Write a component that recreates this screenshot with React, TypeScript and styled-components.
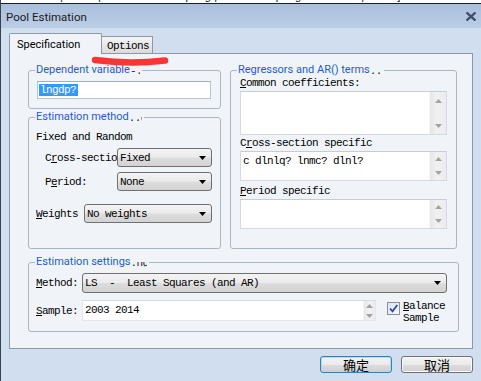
import React from "react";
import styled, { createGlobalStyle } from "styled-components";

const UI = `Roboto, "Liberation Sans", "Noto Sans", sans-serif`;
const MONO = `"Liberation Mono", "DejaVu Sans Mono", monospace`;
const CJK = `"Noto Sans CJK SC", "Noto Sans", sans-serif`;
const PANEL_BG = "#f0f4f9";

const Global = createGlobalStyle`
  html, body { margin: 0; padding: 0; background: #d1deef; }
  body { width: 481px; height: 381px; overflow: hidden; font-family: ${UI}; }
  * { box-sizing: border-box; }
`;

const Window = styled.div`
  position: relative;
  width: 481px;
  height: 381px;
  background: #d1deef;
  border-left: 1px solid #39414f;
  display: flex;
  flex-direction: column;
  overflow: hidden;
`;

const TopStrip = styled.div`
  height: 4px;
  background: #ffffff;
  border-bottom: 1px solid #1e1e1e;
  overflow: hidden;
  white-space: nowrap;
`;

const StripText = styled.div`
  margin-top: -10px;
  padding-left: 4px;
  font: 11px/12px "Liberation Sans", sans-serif;
  color: #111;
  letter-spacing: 0.2px;
`;

const TitleBar = styled.div`
  height: 24px;
  background: linear-gradient(#a9bfdc, #bccde6);
  display: flex;
  align-items: center;
  justify-content: space-between;
  padding: 0 5px 0 5px;
`;

const TitleText = styled.div`
  font-family: ${UI};
  font-size: 11.5px;
  color: #1b1b1b;
  padding-top: 1px;
`;

const CloseIcon = () => (
  <svg width="10" height="9" viewBox="0 0 10 9">
    <path d="M1.3 1.2 L8.7 7.8 M8.7 1.2 L1.3 7.8" stroke="#3f4e68" strokeWidth="2.3" strokeLinecap="square" />
  </svg>
);

const Body = styled.div`
  display: flex;
  flex-direction: column;
  padding: 5px 8px 0 8px;
`;

const TabRow = styled.div`
  display: flex;
  align-items: flex-end;
  height: 20px;
`;

const Tab = styled.div<{ $active?: boolean }>`
  position: relative;
  z-index: 1;
  border: 1px solid #8d99a9;
  ${(p) =>
    p.$active
      ? `
    width: 93px;
    height: 21px;
    margin-bottom: -1px;
    border-bottom: 0;
    background: ${PANEL_BG};
    border-radius: 2px 2px 0 0;
    font-family: ${UI};
    font-size: 11px;
    line-height: 17px;
    padding: 2px 0 0 7px;
    color: #000;
  `
      : `
    width: 51px;
    height: 17px;
    border-left: 0;
    border-bottom: 0;
    background: linear-gradient(#f5f5f5, #dadada);
    font-family: ${MONO};
    font-size: 11px;
    letter-spacing: -0.6px;
    line-height: 16px;
    padding: 1px 0 0 5px;
    color: #000;
  `}
`;

const Panel = styled.div`
  width: 464px;
  height: 296px;
  border: 1px solid #8d99a9;
  background: ${PANEL_BG};
  padding: 16px 0 0 18px;
  display: flex;
  flex-direction: column;
`;

const TopRow = styled.div`
  display: flex;
  gap: 9px;
`;

const Column = styled.div`
  display: flex;
  flex-direction: column;
`;

const Group = styled.div<{ $w: number; $h: number; $mt?: number }>`
  width: ${(p) => p.$w}px;
  height: ${(p) => p.$h}px;
  margin-top: ${(p) => p.$mt ?? 0}px;
  border: 1px solid #aab6c6;
  border-radius: 3px;
  display: flex;
  flex-direction: column;
  align-items: flex-start;
`;

const Legend = styled.div`
  display: flex;
  align-items: flex-start;
  margin: -8px 0 0 6px;
  padding: 0 2px 0 1px;
  height: 14px;
  background: ${PANEL_BG};
  color: #1c5cd3;
  font-family: ${UI};
  font-size: 11px;
  line-height: 14px;
  white-space: nowrap;
`;

const Ghost = styled.span<{ $w: number }>`
  display: inline-block;
  width: ${(p) => p.$w}px;
  height: 5px;
  margin-top: 7px;
  overflow: hidden;
`;

const GhostText = styled.span`
  display: block;
  margin-top: -5px;
  font-family: ${MONO};
  font-size: 11px;
  line-height: 12px;
  letter-spacing: -0.6px;
  color: #222;
`;

const TextInput = styled.div`
  width: 174px;
  height: 18px;
  margin: 4px 0 0 8px;
  background: #fff;
  border: 1px solid #b7c4d5;
  border-top-color: #a3b0c2;
  display: flex;
  align-items: center;
  padding-left: 1px;
`;

const Selected = styled.span`
  display: inline-block;
  height: 12px;
  line-height: 12px;
  padding: 0 2px 0 1px;
  background: #3399ff;
  color: #fff;
  font-family: ${MONO};
  font-size: 11px;
  letter-spacing: -0.6px;
`;

const MonoLine = styled.div<{ $mt?: number; $ml?: number; $lh?: number }>`
  margin-top: ${(p) => p.$mt ?? 0}px;
  margin-left: ${(p) => p.$ml ?? 0}px;
  line-height: ${(p) => p.$lh ?? 14}px;
  font-family: ${MONO};
  font-size: 11px;
  letter-spacing: -0.6px;
  color: #000;
  white-space: nowrap;
`;

const U = styled.span`
  text-decoration: underline;
  text-underline-offset: 1px;
`;

const FieldRow = styled.div<{ $mt: number; $pl: number; $h: number }>`
  display: flex;
  align-items: center;
  margin-top: ${(p) => p.$mt}px;
  padding-left: ${(p) => p.$pl}px;
  height: ${(p) => p.$h}px;
`;

const FieldLabel = styled.div<{ $w: number }>`
  width: ${(p) => p.$w}px;
  overflow: hidden;
  white-space: nowrap;
  font-family: ${MONO};
  font-size: 11px;
  letter-spacing: -0.6px;
  color: #000;
`;

const Combo = styled.div<{ $w: number }>`
  width: ${(p) => p.$w}px;
  height: 100%;
  border: 1px solid #707070;
  border-radius: 3px;
  background: linear-gradient(#f3f3f3 0%, #ebebeb 48%, #dddddd 52%, #d2d2d2 100%);
  display: flex;
  align-items: center;
  padding: 0 5px 0 2px;
  font-family: ${MONO};
  font-size: 11px;
  letter-spacing: -0.6px;
  color: #000;
  white-space: pre;
`;

const ComboText = styled.span`
  flex: 1;
  overflow: hidden;
`;

const Tri = ({ up, color }: { up?: boolean; color: string }) => (
  <svg width="7" height="4" viewBox="0 0 7 4">
    <polygon points={up ? "0,4 7,4 3.5,0" : "0,0 7,0 3.5,4"} fill={color} />
  </svg>
);

const TextBox = styled.div<{ $h: number; $mt: number }>`
  width: 207px;
  height: ${(p) => p.$h}px;
  margin: ${(p) => p.$mt}px 0 0 9px;
  background: #fff;
  border: 1px solid #d3dae4;
  border-top-color: #c3ccd8;
  display: flex;
`;

const TextBoxContent = styled.div`
  flex: 1;
  padding: 2px 2px;
  font-family: ${MONO};
  font-size: 11px;
  line-height: 14px;
  letter-spacing: -0.6px;
  color: #000;
  white-space: pre;
`;

const ScrollBar = styled.div<{ $w: number }>`
  width: ${(p) => p.$w}px;
  background: linear-gradient(90deg, #e6e6e6, #f1f1f1 40%, #ececec);
  display: flex;
  flex-direction: column;
  justify-content: space-between;
  border-left: 1px solid #f6f6f6;
`;

const ScrollBtn = styled.div<{ $h: number }>`
  height: ${(p) => p.$h}px;
  display: flex;
  align-items: center;
  justify-content: center;
`;

const SampleEdit = styled.div`
  width: 294px;
  height: 100%;
  background: #fff;
  border: 1px solid #e0e6ee;
  border-top-color: #d2d9e3;
  display: flex;
`;

const SampleText = styled.div`
  flex: 1;
  padding: 2px 0 0 2px;
  font-family: ${MONO};
  font-size: 11px;
  line-height: 14px;
  letter-spacing: -0.6px;
  color: #000;
`;

const CheckBox = styled.div`
  width: 13px;
  height: 13px;
  margin-left: 11px;
  align-self: flex-start;
  margin-top: 2px;
  border: 1px solid #8f8f8f;
  background: linear-gradient(135deg, #dbe4f1, #f6f8fb);
  display: flex;
  align-items: center;
  justify-content: center;
`;

const CheckMark = () => (
  <svg width="11" height="11" viewBox="0 0 11 11">
    <path d="M2 5.5 L4.5 8.3 L9.3 2" stroke="#2a49a6" strokeWidth="1.8" fill="none" />
  </svg>
);

const CheckLabel = styled.div`
  align-self: flex-start;
  margin-left: 3px;
  font-family: ${MONO};
  font-size: 11px;
  line-height: 12px;
  letter-spacing: -0.6px;
  color: #000;
`;

const ButtonRow = styled.div`
  display: flex;
  justify-content: flex-end;
  gap: 9px;
  margin-top: 7px;
`;

const Button = styled.div<{ $default?: boolean }>`
  width: 72px;
  height: 17px;
  border: 1px solid ${(p) => (p.$default ? "#3c7fb1" : "#707070")};
  border-radius: 3px;
  background: linear-gradient(#f2f2f2 0%, #ebebeb 50%, #dddddd 51%, #cfcfcf 100%);
  box-shadow: ${(p) => (p.$default ? "inset 0 0 0 1px #a8dcf7" : "inset 0 0 0 1px #fafafa")};
  display: flex;
  align-items: center;
  justify-content: center;
  font-family: ${CJK};
  font-size: 13px;
  line-height: 15px;
  color: #000;
`;

const Scribble = styled.svg`
  position: absolute;
  left: 87px;
  top: 53px;
  pointer-events: none;
`;

export default function App() {
  return (
    <>
      <Global />
      <Window>
        <TopStrip>
          <StripText>Pool Filter | Other | Pool Estimate Spring | Estimate Spring Estimation | Sheet]</StripText>
        </TopStrip>
        <TitleBar>
          <TitleText>Pool Estimation</TitleText>
          <CloseIcon />
        </TitleBar>
        <Body>
          <TabRow>
            <Tab $active>Specification</Tab>
            <Tab>Options</Tab>
          </TabRow>
          <Panel>
            <TopRow>
              <Column>
                <Group $w={193} $h={39}>
                  <Legend>
                    Dependent variable
                    <Ghost $w={10}>
                      <GhostText> -.</GhostText>
                    </Ghost>
                  </Legend>
                  <TextInput>
                    <Selected>lngdp?</Selected>
                  </TextInput>
                </Group>
                <Group $w={193} $h={132} $mt={8}>
                  <Legend>
                    Estimation method
                    <Ghost $w={13}>
                      <GhostText>..d</GhostText>
                    </Ghost>
                  </Legend>
                  <MonoLine $mt={6} $ml={7}>Fixed and Random</MonoLine>
                  <FieldRow $mt={4} $pl={16} $h={19}>
                    <FieldLabel $w={72}>
                      C<U>r</U>oss-sectio
                    </FieldLabel>
                    <Combo $w={95}>
                      <ComboText>Fixed</ComboText>
                      <Tri color="#000" />
                    </Combo>
                  </FieldRow>
                  <FieldRow $mt={5} $pl={16} $h={19}>
                    <FieldLabel $w={72}>
                      P<U>e</U>riod:
                    </FieldLabel>
                    <Combo $w={95}>
                      <ComboText>None</ComboText>
                      <Tri color="#000" />
                    </Combo>
                  </FieldRow>
                  <FieldRow $mt={13} $pl={7} $h={19}>
                    <FieldLabel $w={48}>
                      <U>W</U>eights
                    </FieldLabel>
                    <Combo $w={128}>
                      <ComboText>No weights</ComboText>
                      <Tri color="#000" />
                    </Combo>
                  </FieldRow>
                </Group>
              </Column>
              <Group $w={227} $h={179}>
                <Legend>
                  Regressors and AR() terms
                  <Ghost $w={12}>
                    <GhostText>:..</GhostText>
                  </Ghost>
                </Legend>
                <MonoLine $ml={9} $lh={12}>
                  <U>C</U>ommon coefficients:
                </MonoLine>
                <TextBox $h={44} $mt={2}>
                  <TextBoxContent></TextBoxContent>
                  <ScrollBar $w={17}>
                    <ScrollBtn $h={17}>
                      <Tri up color="#a2a2a2" />
                    </ScrollBtn>
                    <ScrollBtn $h={17}>
                      <Tri color="#a2a2a2" />
                    </ScrollBtn>
                  </ScrollBar>
                </TextBox>
                <MonoLine $mt={1} $ml={9}>
                  C<U>r</U>oss-section specific
                </MonoLine>
                <TextBox $h={30} $mt={1}>
                  <TextBoxContent>c dlnlq? lnmc? dlnl?</TextBoxContent>
                  <ScrollBar $w={17}>
                    <ScrollBtn $h={14}>
                      <Tri up color="#a2a2a2" />
                    </ScrollBtn>
                    <ScrollBtn $h={14}>
                      <Tri color="#a2a2a2" />
                    </ScrollBtn>
                  </ScrollBar>
                </TextBox>
                <MonoLine $mt={3} $ml={9}>
                  <U>P</U>eriod specific
                </MonoLine>
                <TextBox $h={30} $mt={1}>
                  <TextBoxContent></TextBoxContent>
                  <ScrollBar $w={17}>
                    <ScrollBtn $h={14}>
                      <Tri up color="#a2a2a2" />
                    </ScrollBtn>
                    <ScrollBtn $h={14}>
                      <Tri color="#a2a2a2" />
                    </ScrollBtn>
                  </ScrollBar>
                </TextBox>
              </Group>
            </TopRow>
            <Group $w={431} $h={70} $mt={13}>
              <Legend>
                Estimation settings
                <Ghost $w={16}>
                  <GhostText>:ngs</GhostText>
                </Ghost>
              </Legend>
              <FieldRow $mt={4} $pl={7} $h={20}>
                <FieldLabel $w={46}>
                  <U>M</U>ethod:
                </FieldLabel>
                <Combo $w={365}>
                  <ComboText>LS  -  Least Squares (and AR)</ComboText>
                  <Tri color="#000" />
                </Combo>
              </FieldRow>
              <FieldRow $mt={7} $pl={7} $h={21}>
                <FieldLabel $w={46}>
                  <U>S</U>ample:
                </FieldLabel>
                <SampleEdit>
                  <SampleText>2003 2014</SampleText>
                  <ScrollBar $w={12}>
                    <ScrollBtn $h={9}>
                      <Tri up color="#a2a2a2" />
                    </ScrollBtn>
                    <ScrollBtn $h={9}>
                      <Tri color="#a2a2a2" />
                    </ScrollBtn>
                  </ScrollBar>
                </SampleEdit>
                <CheckBox>
                  <CheckMark />
                </CheckBox>
                <CheckLabel>
                  <U>B</U>alance
                  <br />
                  Sample
                </CheckLabel>
              </FieldRow>
            </Group>
          </Panel>
          <ButtonRow>
            <Button $default>确定</Button>
            <Button>取消</Button>
          </ButtonRow>
        </Body>
        <Scribble width="84" height="16" viewBox="0 0 84 16">
          <path d="M7 7 Q42 11.5 77 7.5" stroke="#fb3434" strokeWidth="6.5" strokeLinecap="round" fill="none" />
        </Scribble>
      </Window>
    </>
  );
}
